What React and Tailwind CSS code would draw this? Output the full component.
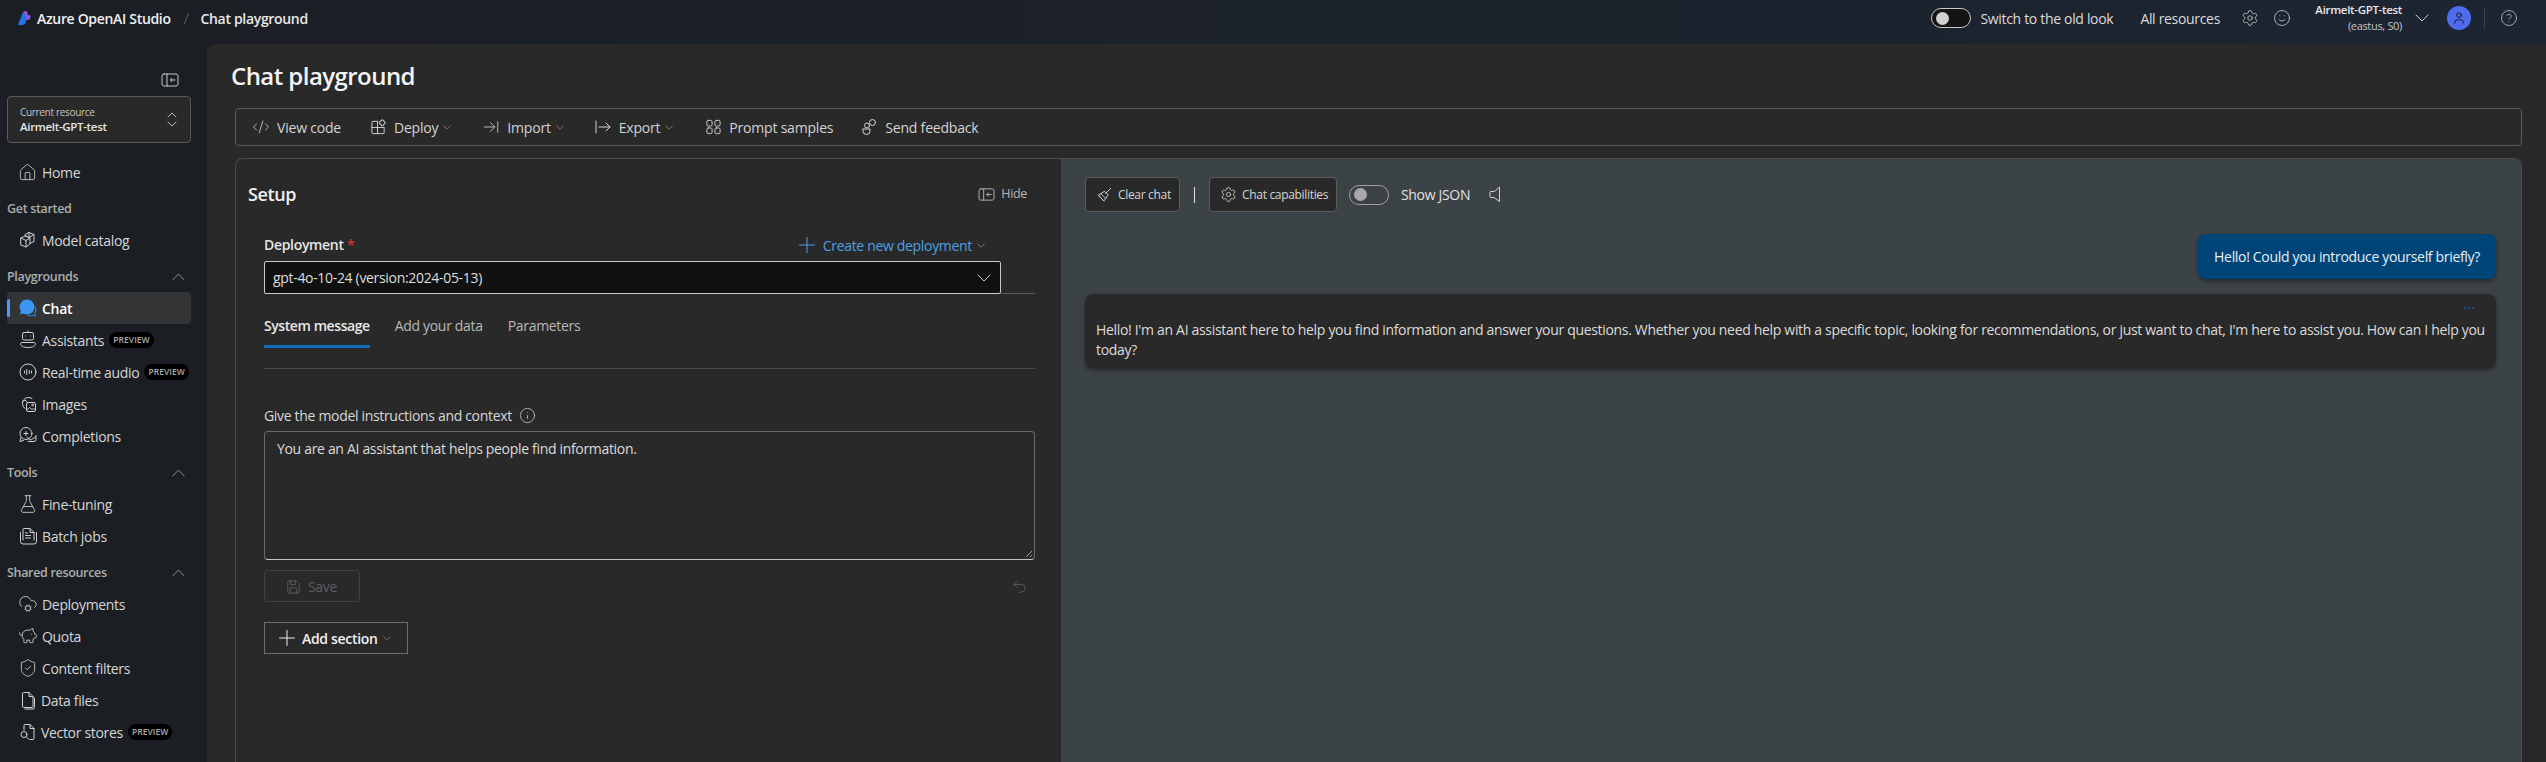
import React from "react";
import { House, CloudCog, PiggyBank, ShieldCheck, Info, Undo2, Settings, Smile, CircleHelp, User, CodeXml, ArrowRightToLine, FlaskConical } from "lucide-react";

const S = ({ children, className = "w-5 h-5", vb = "0 0 20 20" }) => (
  <svg viewBox={vb} className={className + " shrink-0"} fill="none" stroke="currentColor" strokeWidth="1" strokeLinecap="round" strokeLinejoin="round">{children}</svg>
);

const Logo = () => (
  <svg viewBox="0 0 16 18" className="w-[15px] h-[17px] shrink-0">
    <path d="M1 16 L6 3 Q6.6 1.5 8 1.5 L9.5 1.5 L9.5 12 Q9.5 15.5 6 16 Z" fill="#1f74ec" />
    <path d="M7 1.5 L10 1.5 Q11 1.5 11.2 3 L11.5 5.5 L14.5 6 L13 10 L10 10.5 L9 4 Z" fill="#c04fd0" />
    <path d="M9.5 5.5 L14.5 6 L13.5 9.5 L9.5 10.5 Z" fill="#7b5cf0" />
  </svg>
);

const PanelIcon = ({ className }) => (
  <S className={className} vb="0 0 18 16">
    <rect x="1" y="2" width="16" height="12" rx="2" />
    <path d="M6 2v12M14 8H9.5M11 6.2 9.2 8l1.8 1.8" />
  </S>
);

const PlusIcon = ({ className }) => (
  <S className={className} vb="0 0 16 16"><path d="M8 .5v15M.5 8h15" /></S>
);

const DownIcon = ({ className }) => (
  <S className={className} vb="0 0 14 8"><path d="M1 1l6 6 6-6" /></S>
);

const Preview = () => (
  <span className="ml-[5px] h-4 px-[4px] rounded-full bg-black text-[#a8a8a8] text-[8.5px] font-semibold leading-4 tracking-[0.05px]">PREVIEW</span>
);

const icons = {
  box: <S><path d="M7 4.5 11 2.5l5 2v7l-4 2M11 2.5v5l5-3M11 7.5l-4-2" /><path d="M3 8l4-2 5 2v6l-4 3-5-2zM3 8l5 2.5 4-2.5M8 10.5V17" /></S>,
  chat: <svg viewBox="0 0 20 20" className="w-5 h-5 shrink-0"><path d="M9 1.5a7.5 7.5 0 0 1 0 15 7.4 7.4 0 0 1-3.6-.9L2 16.5l.9-3.4A7.5 7.5 0 0 1 9 1.5Z" fill="#3a96ef"/><path d="M17 8.5c1.4 2.6 1 5.7-.3 7l.5 2.6-2.7-.8c-1.3.7-3.2.8-5 .2" fill="none" stroke="#3a96ef" strokeWidth="1"/></svg>,
  bot: <S><rect x="4.5" y="2.5" width="11" height="7.5" rx="1.5"/><path d="M10 1v1.500M7.500 6h.01M12.500 6h.01M4 12.500h12c1 0 1.500.700 1.500 1.500 0 2-3 3.500-7.500 3.500S2.500 16 2.500 14c0-.8.500-1.500 1.500-1.500Z"/></S>,
  audio: <S><circle cx="10" cy="10" r="8"/><path d="M6.500 9v2M8.700 7.500v5M11.300 8.500v3M13.500 9v2"/></S>,
  image: <S><path d="M7 14.500A6 6 0 1 1 14 4.500"/><path d="M4.500 7.500 7 6l2 2"/><rect x="8.5" y="8.5" width="9" height="9" rx="1.5"/><circle cx="14.5" cy="11" r=".8"/><path d="m8.800 16 2.700-2.500 2.500 2 1.500-1 2 1.500"/></S>,
  comp: <S><circle cx="8" cy="7.5" r="6"/><path d="M6 7.500h4M8 5.500v4M3 11.500l-1 4 3.500-1"/><path d="M10 15.500h6a2 2 0 0 0 2-2v-4M9 11.500l4 2.500 4.500-3"/></S>,
  flask: <FlaskConical className="w-[20px] h-[20px] shrink-0" strokeWidth={1.05} />,
  batch: <S><path d="M5 14V3.500a1 1 0 0 1 1-1h6l4 4V14M12 2.500v4h4M7.500 7h2M7.500 9.500h5M7.500 12h5"/><path d="M2.500 6.500v9a2.500 2.500 0 0 0 2.500 2.500h11a2.500 2.500 0 0 0 2.500-2.500v-9"/></S>,
  deploy: <CloudCog className="w-[20px] h-[20px] shrink-0" strokeWidth={1.05} />,
  quota: <PiggyBank className="w-[20px] h-[20px] shrink-0" strokeWidth={1.05} />,
  shield: <ShieldCheck className="w-[20px] h-[20px] shrink-0" strokeWidth={1.05} />,
  file: <S><path d="M4.500 3.500a1 1 0 0 1 1-1h5.500l4 4v10a1 1 0 0 1-1 1h-8.500a1 1 0 0 1-1-1zM11 2.500v4h4M16.500 8v9.500a1.500 1.500 0 0 1-1.500 1.500H7"/></S>,
  vector: <S><path d="M6 8V3.500a1 1 0 0 1 1-1h5l4 4v10a1 1 0 0 1-1 1h-3M12 2.500v4h4"/><circle cx="6" cy="12.5" r="3"/><path d="m8.200 14.700 2.800 2.800"/></S>,
};

const Item = ({ icon, label, active, preview, tight }) => (
  <div className={"relative h-8 flex items-center rounded-[4px] pl-[11px] " + (active ? "bg-[#333436]" : "")}>
    {active && <span className="absolute left-0 top-[7px] bottom-[7px] w-[3px] rounded-full bg-[#479ef5]" />}
    <span className={active ? "text-[#3a96ef]" : "text-[#d0d0d0]"}>{icon}</span>
    <span className={"text-[14px] whitespace-nowrap " + (tight ? "ml-[3px] " : "ml-[4px] ") + (active ? "text-white font-semibold" : "text-[#d6d6d6]")}>{label}</span>
    {preview && <Preview />}
  </div>
);

const Section = ({ label, chevron = true }) => (
  <div className="h-[36px] pt-[8px] pb-[2px] flex items-center justify-between pr-[6px] text-[12.5px] font-semibold text-[#adadad]">
    <span>{label}</span>
    {chevron && <S className="w-[13px] h-[8px] text-[#8f8f8f]" vb="0 0 13 8"><path d="M.8 7 6.500 1l5.700 6" /></S>}
  </div>
);

const Sidebar = () => (
  <aside className="w-[207px] shrink-0 bg-[#1b1f24] pl-[7px] pr-[16px]">
    <div className="h-[52px] flex items-end justify-end pr-[12px] pb-[8px]">
      <PanelIcon className="w-[18px] h-[16px] text-[#c8c8c8]" />
    </div>
    <div className="h-[47px] rounded-[4px] border border-[#5a5a5a] bg-[#292929] pl-[12px] pr-[13px] flex items-center justify-between">
      <div className="flex flex-col">
        <span className="text-[10px] leading-[13px] text-[#c4c4c4]">Current resource</span>
        <span className="text-[11.5px] leading-[15px] font-semibold text-[#e6e6e6]">Airmelt-GPT-test</span>
      </div>
      <S className="w-[10px] h-[17px] text-[#b8b8b8]" vb="0 0 10 17"><path d="M1 6 5 2l4 4M1 11l4 4 4-4" /></S>
    </div>
    <div className="mt-[13px]">
      <Item icon={<House className="w-[19px] h-[19px] mr-[1px]" strokeWidth={1.05} />} label="Home" />
    </div>
    <Section label="Get started" chevron={false} />
    <Item icon={icons.box} label="Model catalog" />
    <Section label="Playgrounds" />
    <Item icon={icons.chat} label="Chat" active />
    <Item icon={icons.bot} label="Assistants" preview />
    <Item icon={icons.audio} label="Real-time audio" preview />
    <Item icon={icons.image} label="Images" />
    <Item icon={icons.comp} label="Completions" />
    <Section label="Tools" />
    <Item icon={icons.flask} label="Fine-tuning" />
    <Item icon={icons.batch} label="Batch jobs" />
    <Section label="Shared resources" />
    <Item icon={icons.deploy} label="Deployments" />
    <Item icon={icons.quota} label="Quota" />
    <Item icon={icons.shield} label="Content filters" />
    <Item icon={icons.file} label="Data files" tight />
    <Item icon={icons.vector} label="Vector stores" preview tight />
  </aside>
);

const Toggle = ({ knob = "bg-[#d0d0d0]", track = "bg-[#141414]", border = "border-[#c8c8c8]" }) => (
  <span className={"w-[40px] h-[20px] rounded-full border flex items-center pl-[4px] shrink-0 " + track + " " + border}>
    <span className={"w-[13px] h-[13px] rounded-full " + knob} />
  </span>
);

const Header = () => (
  <header className="h-[44px] flex items-center bg-gradient-to-r from-[#1b1e23] to-[#1c2532] pl-[17px] pr-[28px] pb-[8px]">
    <Logo />
    <span className="ml-[5px] text-[14px] font-semibold text-[#f0f0f0]">Azure OpenAI Studio</span>
    <span className="ml-[13px] text-[#777] text-[15px] font-light">/</span>
    <span className="ml-[12px] text-[14px] font-semibold text-[#e8e8e8]">Chat playground</span>
    <div className="ml-auto flex items-center">
      <Toggle />
      <span className="ml-[9px] text-[14px] text-[#dcdcdc]">Switch to the old look</span>
      <span className="ml-[27px] text-[14px] text-[#dcdcdc]">All resources</span>
      <Settings className="ml-[21px] w-[18px] h-[18px] text-[#c8c8c8]" strokeWidth={1.1} />
      <Smile className="ml-[14px] w-[18px] h-[18px] text-[#c8c8c8]" strokeWidth={1.1} />
      <div className="ml-[10px] w-[101px] flex flex-col items-end">
        <span className="text-[11.5px] leading-[16px] font-semibold text-[#e6e6e6]">Airmelt-GPT-test</span>
        <span className="text-[11px] leading-[16px] text-[#c4c4c4]">(eastus, S0)</span>
      </div>
      <DownIcon className="ml-[13px] w-[14px] h-[8px] text-[#d0d0d0]" />
      <span className="ml-[18px] w-[24px] h-[24px] rounded-full bg-[#4f6bed] flex items-center justify-center text-[#111]">
        <User className="w-[14px] h-[14px]" strokeWidth={1.5} />
      </span>
      <span className="ml-[13px] w-px h-[20px] bg-[#3c4248]" />
      <CircleHelp className="ml-[15px] w-[18px] h-[18px] text-[#b8b8b8]" strokeWidth={1.1} />
    </div>
  </header>
);

const Caret = () => <DownIcon className="ml-[5px] w-[8px] h-[5px] text-[#b0b0b0]" />;

const Tool = ({ icon, label, caret, ml }) => (
  <div className={"flex items-center text-[#d4d4d4] " + ml}>
    {icon}
    <span className="ml-[7px] text-[14px] tracking-[-0.2px]">{label}</span>
    {caret && <Caret />}
  </div>
);

const Toolbar = () => (
  <div className="ml-[28px] mr-[24px] h-[38px] rounded-[4px] border border-[#5c5c5c] flex items-center pl-[16px]">
    <Tool ml="" icon={<CodeXml className="w-[18px] h-[18px]" strokeWidth={1.1} />} label="View code" />
    <Tool ml="ml-[29px]" icon={<S className="w-[17px] h-[18px]" vb="0 0 18 18"><path d="M8 3H3a1 1 0 0 0-1 1v11a1 1 0 0 0 1 1h11a1 1 0 0 0 1-1v-5M2 9.500h13M8 3v13"/><rect x="10.5" y="2" width="5" height="5" rx="1" transform="rotate(45 13 4.500)"/></S>} label="Deploy" caret />
    <Tool ml="ml-[31px]" icon={<ArrowRightToLine className="w-[18px] h-[18px]" strokeWidth={1.1} />} label="Import" caret />
    <Tool ml="ml-[30px]" icon={<S className="w-[18px] h-[18px]" vb="0 0 18 18"><path d="M2 3v12M5 9h11M12 5l4 4-4 4"/></S>} label="Export" caret />
    <Tool ml="ml-[32px]" icon={<S className="w-[17px] h-[18px]" vb="0 0 18 18"><rect x="2" y="2" width="5.5" height="6" rx="1.5"/><rect x="10.5" y="2" width="5.5" height="6" rx="1.5"/><rect x="2" y="10" width="5.5" height="6" rx="1.5"/><rect x="10.5" y="10" width="5.5" height="6" rx="1.5"/></S>} label="Prompt samples" />
    <Tool ml="ml-[27px]" icon={<S className="w-[18px] h-[18px]" vb="0 0 18 18"><circle cx="12.5" cy="4.5" r="3"/><circle cx="7" cy="7.5" r="2.5"/><path d="M3 11h7v2a3.500 3.500 0 0 1-7 0z"/></S>} label="Send feedback" />
  </div>
);

const SetupPane = () => (
  <section className="w-[825px] shrink-0 h-full pl-[13px] relative">
    <div className="flex items-center justify-between h-[70px] pr-[34px]">
      <span className="-ml-[1px] text-[18px] font-semibold text-[#f0f0f0] tracking-[-0.4px]">Setup</span>
      <div className="flex items-center text-[#b8b8b8]">
        <PanelIcon className="w-[17px] h-[15px]" />
        <span className="ml-[6px] text-[12.5px]">Hide</span>
      </div>
    </div>
    <div className="pl-[15px]">
      <div className="mr-[26px] h-[32px] flex items-center justify-between">
        <span className="text-[14px] font-semibold text-[#e6e6e6] pb-[2px]">Deployment <span className="text-[#d13438]">*</span></span>
        <div className="flex items-center text-[#4aa0e6] mr-[50px]">
          <PlusIcon className="w-[16px] h-[16px]" />
          <span className="ml-[8px] text-[14px]">Create new deployment</span>
          <Caret />
        </div>
      </div>
      <div className="mr-[26px] border-b border-[#5a5a5a]">
        <div className="w-[737px] h-[33px] rounded-[2px] border border-[#c8c8c8] bg-[#111111] pl-[8px] pr-[9px] flex items-center justify-between -mb-px">
          <span className="text-[14px] text-[#dedede]">gpt-4o-10-24 (version:2024-05-13)</span>
          <DownIcon className="w-[14px] h-[8px] text-[#d0d0d0]" />
        </div>
      </div>
      <div className="mr-[26px] h-[75px] border-b border-[#4c4c4c] flex items-start gap-[25px] pt-[22px]">
        <div className="flex flex-col">
          <span className="text-[14px] font-semibold text-[#e8e8e8] leading-[20px] tracking-[-0.42px]">System message</span>
          <span className="mt-[9px] h-[3px] bg-[#0f6cbd]" />
        </div>
        <span className="text-[14px] text-[#b8b8b8] leading-[20px]">Add your data</span>
        <span className="text-[14px] text-[#b8b8b8] leading-[20px]">Parameters</span>
      </div>
      <div className="mt-[35px] h-[22px] flex items-center text-[14px] text-[#d8d8d8]">
        Give the model instructions and context
        <Info className="ml-[7px] w-[17px] h-[17px] text-[#d0d0d0]" strokeWidth={1.1} />
      </div>
      <div className="relative mt-[5px] mr-[26px] h-[129px] rounded-[4px] border border-[#6a6a6a] border-b-[#c4c4c4] pl-[12px] pt-[7px] text-[14px] leading-[20px] text-[#dcdcdc]">
        You are an AI assistant that helps people find information.
        <svg viewBox="0 0 8 8" className="absolute right-[1px] bottom-[1px] w-[8px] h-[8px]" stroke="#9a9a9a" fill="none"><path d="M1 7 7 1M5 7l2-2" /></svg>
      </div>
      <div className="mt-[10px] mr-[26px] flex items-center justify-between">
        <div className="w-[96px] h-[32px] rounded-[4px] border border-[#414141] flex items-center pl-[20px] text-[#5e5e5e]">
          <S className="w-[17px] h-[17px]" vb="0 0 18 18"><path d="M3 4a1 1 0 0 1 1-1h8l3 3v9a1 1 0 0 1-1 1H4a1 1 0 0 1-1-1z"/><path d="M6 3v4h5V3M5.500 16v-5.500h7V16"/></S>
          <span className="ml-[6px] text-[14px]">Save</span>
        </div>
        <Undo2 className="mr-[7px] w-[17px] h-[17px] text-[#656565]" strokeWidth={1.1} />
      </div>
      <div className="mt-[20px] w-[144px] h-[32px] border border-[#6e6e6e] flex items-center pl-[14px] text-[#f0f0f0]">
        <PlusIcon className="w-[16px] h-[16px]" />
        <span className="ml-[7px] text-[14px] font-semibold">Add section</span>
        <Caret />
      </div>
    </div>
  </section>
);

const ChatPane = () => (
  <section className="flex-1 min-w-0 h-full bg-[#3c4347] pl-[24px] pr-[25px] pt-[18px]">
    <div className="flex items-center h-[35px]">
      <div className="w-[95px] h-[35px] rounded-[4px] border border-[#5c5c5c] bg-[#292929] flex items-center pl-[10px] text-[#d6d6d6]">
        <S className="w-[17px] h-[17px]" vb="0 0 18 18"><path d="M10 8 15.500 2.500M3 9.500 9 5.500l4 4-4.500 6zM5 8l5.500 5.500M2 9.500l6.500 6.500" /></S>
        <span className="ml-[5px] pt-[1px] text-[12px]">Clear chat</span>
      </div>
      <span className="ml-[14px] w-px h-[16px] bg-[#e0e0e0]" />
      <div className="ml-[14px] w-[128px] h-[35px] rounded-[4px] border border-[#5c5c5c] bg-[#292929] flex items-center pl-[10px] text-[#d6d6d6]">
        <Settings className="w-[17px] h-[17px]" strokeWidth={1.2} />
        <span className="ml-[5px] pt-[1px] text-[12px] whitespace-nowrap">Chat capabilities</span>
      </div>
      <div className="ml-[12px]"><Toggle knob="bg-[#a8a8a8]" track="bg-transparent" border="border-[#a0a0a0]" /></div>
      <span className="ml-[12px] text-[14px] text-[#e0e0e0]">Show JSON</span>
      <S className="ml-[19px] w-[12px] h-[17px] text-[#d0d0d0]" vb="0 0 12 17"><path d="M10.500 1.500v14L5 11.500H2a1 1 0 0 1-1-1v-4a1 1 0 0 1 1-1h3z" /></S>
    </div>
    <div className="mt-[22px] flex justify-end">
      <div className="h-[45px] rounded-[8px] bg-[#004578] shadow-[0_2px_4px_rgba(0,0,0,0.4)] px-[16px] flex items-center text-[14px] text-[#e8eef4]">
        Hello! Could you introduce yourself briefly?
      </div>
    </div>
    <div className="relative mt-[15px] h-[74px] rounded-[8px] bg-[#292929] shadow-[0_2px_4px_rgba(0,0,0,0.4)] pl-[11px] pr-[4px] pt-[26px] text-[14px] leading-[20px] text-[#dcdcdc]">
      Hello! I'm an AI assistant here to help you find information and answer your questions. Whether you need help with a specific topic, looking for recommendations, or just want to chat, I'm here to assist you. How can I help you today?
      <span className="absolute right-[22px] top-[13px] flex gap-[2px]">
        <i className="w-[2px] h-[2px] bg-[#0f548c]" /><i className="w-[2px] h-[2px] bg-[#0f548c]" /><i className="w-[2px] h-[2px] bg-[#0f548c]" />
      </span>
    </div>
  </section>
);

export default function App() {
  return (
    <div className="w-[2546px] h-[762px] overflow-hidden bg-[#1b1f24] flex flex-col tracking-[-0.32px] font-['Open_Sans','Noto_Sans',sans-serif]">
      <Header />
      <div className="flex-1 min-h-0 flex">
        <Sidebar />
        <main className="flex-1 min-w-0 bg-[#292929] rounded-tl-[8px] flex flex-col">
          <h1 className="ml-[24px] h-[64px] flex items-center text-[24px] font-semibold text-[#f4f4f4] tracking-[-0.55px]">Chat playground</h1>
          <Toolbar />
          <div className="ml-[28px] mr-[24px] mt-[12px] flex-1 min-h-0 rounded-t-[8px] border border-b-0 border-[#4c4c4c] flex overflow-hidden">
            <SetupPane />
            <ChatPane />
          </div>
        </main>
      </div>
    </div>
  );
}
